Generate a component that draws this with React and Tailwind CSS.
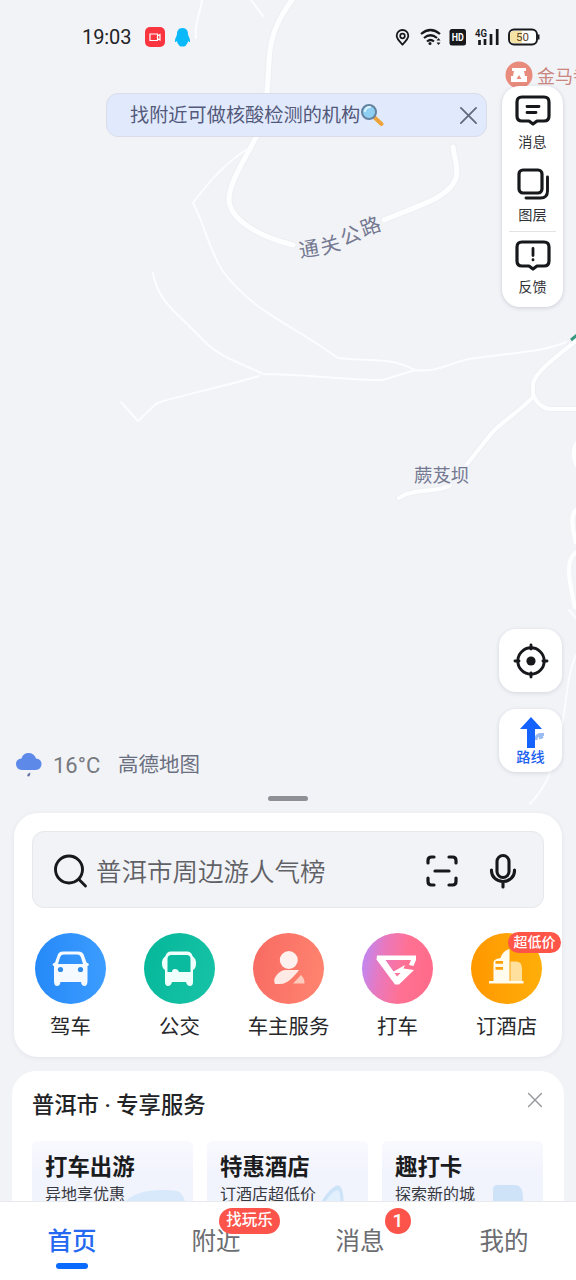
import React from "react";

const ink = "#17181b";

function MapCanvas() {
  return (
    <svg className="absolute inset-0" width="576" height="1280" viewBox="0 0 576 1280" fill="none">
      <g stroke="#e6e8ee" strokeLinecap="round" strokeLinejoin="round" opacity=".4">
        <path strokeWidth="7" d="M292 0C276 22 270 38 269 62C267 90 268 118 253 143C242 164 229 184 229 200C230 218 254 235 293 245M384 220C420 205 450 197 456 178C459 166 454 158 453 147" />
        <path strokeWidth="6" d="M576 341C556 357 535 372 533 384V397C520 411 500 423 491 434C482 445 474 455 465 467M450 485C440 493 412 488 399 498M533 394C536 403 543 409 552 409H576" />
      </g>
      <g stroke="#fdfeff" strokeLinecap="round" strokeLinejoin="round">
        <path strokeWidth="5" d="M292 0C276 22 270 38 269 62C267 90 268 118 253 143C242 164 229 184 229 200C230 218 254 235 293 245M384 220C420 205 450 197 456 178C459 166 454 158 453 147" />
        <path strokeWidth="4" d="M576 341C556 357 535 372 533 384V397C520 411 500 423 491 434C482 445 474 455 465 467M450 485C440 493 412 488 399 498M533 394C536 403 543 409 552 409H576" />
        <path strokeWidth="4" d="M580 440C570 448 574 462 579 468M580 508C567 512 574 532 576 544M577 552C562 560 572 590 575 609" strokeLinecap="butt" />
        <path strokeWidth="2" d="M202 0C200 14 194 24 196 38M251 0L263 16M246 150C230 160 210 180 193 203C204 223 208 247 222 270C246 304 280 320 316 343L338 358C367 362 388 356 415 370C436 373 450 363 469 359C505 353 541 353 566 342M415 370L383 380C350 380 300 374 263 374C245 364 222 360 202 339C182 317 157 302 153 273M259 376C225 386 179 396 157 403L138 421L121 402" opacity=".85" />
        <path strokeWidth="2" d="M569 610L576 618M576 655C564 681 568 719 552 766C547 784 538 795 530 804" opacity=".8" />
      </g>
      <path d="M571 340L577 335" stroke="#37977f" strokeWidth="3" />
      <g fill="#747991" stroke="#f2f3f7" strokeWidth="3" paintOrder="stroke" fontFamily="'Noto Sans CJK SC', sans-serif">
        <g fontSize="20" textAnchor="middle">
          <text transform="translate(310 256) rotate(-10)">通</text>
          <text transform="translate(332 252) rotate(-16)">关</text>
          <text transform="translate(353 242) rotate(-22)">公</text>
          <text transform="translate(373 233) rotate(-20)">路</text>
        </g>
        <text x="414" y="482" fontSize="18.4">蕨芨坝</text>
        <text x="537" y="83" fontSize="18" fill="#c98780">金马寺</text>
      </g>
      <circle cx="519" cy="75" r="13.500" fill="#e88b7c" />
      <path d="M512 68h14v3h-2l1 5h2v6h-16v-6h2l1-5h-2z" fill="#fff" />
      <path d="M519 75l2.500 4h-5z" fill="#e88b7c" />
    </svg>
  );
}

function StatusBar() {
  return (
    <div className="relative flex h-[74px] shrink-0 items-center pl-[82px] pr-9">
      <span className="w-[62px] text-[20px] tracking-[-0.1px] text-[#222327]">19:03</span>
      <svg width="52" height="24" viewBox="0 0 52 24">
        <rect x="1" y="2" width="20" height="20" rx="5" fill="#fa3540" />
        <path d="M6 9h7.500v6.500H6zM13.500 11l2.500-1.500v5.500l-2.500-1.500" fill="none" stroke="#fff" strokeWidth="1.200" />
        <path d="M38.500 3c-4 0-5.500 3-5.500 6c0 2-2.500 5-2 7.500c.4 1.500 1.500-.5 2-.5c.2 2 1 3 2 4c0 2 7 2 7 0c1-1 1.800-2 2-4c.5 0 1.600 2 2 .5c.5-2.500-2-5.500-2-7.500c0-3-1.500-6-5.500-6z" fill="#09b9fa" />
      </svg>
      <div className="grow" />
      <svg width="146" height="24" viewBox="394 25 146 24" fill="none">
        <path d="M402.500 44.500c-3-3-5.800-5.500-5.800-8.700a5.800 5.800 0 0 1 11.600 0c0 3.200-2.800 5.700-5.800 8.700z" stroke={ink} strokeWidth="1.800" />
        <circle cx="402.500" cy="36" r="2.300" stroke={ink} strokeWidth="1.700" />
        <path d="M421 34q9.500-8 19 0M424 38q6.500-5.500 13 0M427 41.500q3.500-3 7 0" stroke={ink} strokeWidth="2.200" />
        <circle cx="430" cy="43.500" r="1.500" fill={ink} />
        <path d="M436.500 40.500l2-2.500l2 2.500zM436.500 42.500l2 2.500l2-2.500z" fill={ink} />
        <rect x="449.500" y="29" width="16.500" height="16.500" rx="2.500" fill={ink} />
        <text x="451.700" y="41.200" fontSize="10.500" fontWeight="700" fill="#fff" fontFamily="Roboto, sans-serif" textLength="12" lengthAdjust="spacingAndGlyphs">HD</text>
        <text x="475" y="37" fontSize="10.500" fontWeight="600" fill={ink} fontFamily="Roboto, sans-serif" textLength="12" lengthAdjust="spacingAndGlyphs">4G</text>
        <path d="M479.500 45v-5M485 45v-6M491 45v-11M497.200 45v-16" stroke={ink} strokeWidth="2.700" />
        <rect x="509" y="29.500" width="28" height="15" rx="5" fill="#fff" stroke={ink} strokeWidth="1.900" />
        <path d="M514 31h8v12h-8q-4 0-4-4v-4q0-4 4-4z" fill="#f5e3a5" />
        <path d="M538.500 34.500v5" stroke={ink} strokeWidth="2" />
        <text x="522.500" y="41.200" fontSize="11.500" textAnchor="middle" fill="#60452c" fontFamily="Roboto, sans-serif">50</text>
      </svg>
    </div>
  );
}

function Bubble({ children }) {
  return (
    <svg width="38" height="34" viewBox="0 0 38 34" fill="none" stroke={ink} strokeWidth="3.200" strokeLinecap="round" strokeLinejoin="round">
      <path d="M8 3h22q5 0 5 5v14q0 5-5 5h-7l-4 3l-4-3H8q-5 0-5-5V8q0-5 5-5z" />
      {children}
    </svg>
  );
}

function SideItem({ label, children }) {
  return (
    <div className="flex h-[72.500px] flex-col items-center pt-[8px]">
      {children}
      <span className="mt-[4px] text-[14.200px] leading-[20px] text-[#303136]">{label}</span>
    </div>
  );
}

function SideTools() {
  return (
    <div className="h-[221px] w-[61px] rounded-[18px] bg-white shadow-[0_1px_4px_rgba(50,60,90,0.2)]">
      <SideItem label="消息">
        <Bubble><path strokeWidth="2.800" d="M13 12.500h12M13 18.500h9" /></Bubble>
      </SideItem>
      <SideItem label="图层">
        <svg width="38" height="34" viewBox="0 0 38 34" fill="none" stroke={ink} strokeWidth="3.200" strokeLinecap="round">
          <rect x="5" y="3" width="23" height="23" rx="4" />
          <path d="M33.500 10v14q0 7-7 7H12" strokeWidth="2.900" />
        </svg>
      </SideItem>
      <div className="mx-[7px] -mb-px h-px bg-[#e2e3e7]" />
      <SideItem label="反馈">
        <Bubble><path strokeWidth="2.800" d="M19 9.500v7M19 20.700v.2" /></Bubble>
      </SideItem>
    </div>
  );
}

function CloseIcon({ className, size, stroke = 1.8 }) {
  return (
    <svg className={className} width={size} height={size} viewBox="0 0 20 20" stroke="currentColor" strokeWidth={stroke} strokeLinecap="round">
      <path d="M2 2l16 16M18 2L2 18" />
    </svg>
  );
}

function Notice() {
  return (
    <div className="mt-[19px] flex h-[44px] w-[381px] items-center rounded-[12px] border border-[#dadde7] bg-[#e1eafd] pl-[23px] pr-[8px]">
      <span className="mt-[2px] text-[19.200px] leading-[28px] text-[#53597a]">找附近可做核酸检测的机构</span>
      <svg width="24" height="24" viewBox="0 0 24 24">
        <path d="M14 14l7.500 7" stroke="#eda33b" strokeWidth="4" strokeLinecap="round" />
        <circle cx="9" cy="9" r="7" fill="#8fd0f2" stroke="#65829e" strokeWidth="2" />
        <path d="M5 8q1-4 5-4" stroke="#def5ff" strokeWidth="2" fill="none" strokeLinecap="round" />
      </svg>
      <div className="grow" />
      <CloseIcon className="text-[#62697d]" size={19} stroke={1.9} />
    </div>
  );
}

function FloatingButtons() {
  return (
    <div className="flex flex-col gap-[17px]">
      <div className="flex size-[63px] items-center justify-center rounded-[17px] bg-white shadow-[0_1px_4px_rgba(50,60,90,0.16)]">
        <svg width="36" height="36" viewBox="0 0 36 36" fill="none" stroke={ink} strokeWidth="2.900" strokeLinecap="round">
          <circle cx="18" cy="18" r="13.200" />
          <circle cx="18" cy="18" r="4.600" fill={ink} stroke="none" />
          <path d="M18 2v4M18 30v4M2 18h4M30 18h4" />
        </svg>
      </div>
      <div className="flex size-[63px] flex-col items-center rounded-[17px] bg-white pt-[7px] shadow-[0_1px_4px_rgba(50,60,90,0.16)]">
        <svg width="32" height="32" viewBox="0 0 32 32">
          <path d="M21 24q0-5 4-5.500h4M24 22l4-1.500" stroke="#9bbcf3" strokeWidth="3" fill="none" />
          <path d="M16 1l11 12h-7v19h-8V13H5z" fill="#1463ff" />
        </svg>
        <span className="text-[14.200px] leading-[18px] font-medium text-[#1d62ee]">路线</span>
      </div>
    </div>
  );
}

function Weather() {
  return (
    <div className="flex h-[30px] items-center pl-[15px]">
      <svg width="28" height="28" viewBox="0 0 28 28">
        <path d="M7 19q-6-.5-6-6q0-5 5.500-5.500Q8 2 13.500 2T21 7.500Q26.500 8 26.500 13q0 5.500-6 6z" fill="#5d8ae8" />
        <path d="M14 22q1-.5 1.300-.5q0 4-2 4q-1.800-.2-.8-2z" fill="#6574a5" />
      </svg>
      <span className="ml-[10px] w-[65px] text-[22px] text-[#77797f]">16°C</span>
      <span className="text-[20.500px] text-[#6b7080]">高德地图</span>
    </div>
  );
}

function SearchBox() {
  return (
    <div className="flex h-[77px] items-center rounded-[12px] border border-[#e7e8ec] bg-[#f2f3f7] pl-[20px] pr-[26px] pt-[2px]">
      <svg width="36" height="36" viewBox="0 0 36 36" fill="none" stroke={ink} strokeWidth="2.900" strokeLinecap="round">
        <circle cx="16" cy="16.500" r="13.500" />
        <path d="M26.500 27l6 6" />
      </svg>
      <span className="ml-[7px] mt-[2px] text-[25.500px] leading-[36px] font-[350] text-[#606166]">普洱市周边游人气榜</span>
      <div className="grow" />
      <svg width="34" height="34" viewBox="0 0 34 34" fill="none" stroke={ink} strokeWidth="3.200" strokeLinecap="round">
        <path d="M3 9V6.500Q3 3 6.500 3H9M24 3h3.500Q31 3 31 6.500V9M3 24v3.500Q3 31 6.500 31H9M24 31h3.500Q31 31 31 27.500V24M10 17h14" />
      </svg>
      <svg className="ml-[30px]" width="28" height="36" viewBox="0 0 28 36" fill="none" stroke={ink} strokeWidth="3.100" strokeLinecap="round">
        <rect x="8" y="2.500" width="12" height="22" rx="6" />
        <path d="M2.500 17v1a11.500 10.500 0 0 0 23 0v-1M14 28.500v5.500" />
      </svg>
    </div>
  );
}

const services = [
  {
    name: "驾车",
    color: "bg-[linear-gradient(90deg,#2589f8,#3c9cff)]",
    art: (
      <>
        <path fillRule="evenodd" fill="#f4faff" d="M28 18.500h15q5 0 6 4l2.500 7l2 1q1 2-1 2.500v15q0 5-3 5q-3 0-3.500-4H25.500q-.5 4-3.500 4q-3 0-3-5V33q-2-.5-1-2.500l2-1l2.500-7q1-4 5.500-4zm1 3q-3 0-4 3l-2 6.500h25l-2-6.500q-1-3-4-3z" />
        <circle cx="25.500" cy="36.500" r="2.600" fill="#2e8be9" /><circle cx="45.500" cy="36.500" r="2.600" fill="#2e8be9" />
      </>
    ),
  },
  {
    name: "公交",
    color: "bg-[linear-gradient(110deg,#05b79a,#18c3a7)]",
    art: (
      <>
        <path fill="#effffb" d="M27 18.500h16q4.500 0 5.500 4.500q4 3 3.500 8q0 4-3 6v12q0 4-3 4t-4-4H28q-1 4-4 4t-3-4V37q-3-2-3-6q-.5-5 3.500-8q1-4.500 5.500-4.500z" />
        <path fill="#0abb9f" d="M27.500 22h15q4 0 4 4v13H35q-1-3-4-3q-3 0-3 3h-4.500V26q0-4 4-4z" />
      </>
    ),
  },
  {
    name: "车主服务",
    color: "bg-[linear-gradient(100deg,#f86a62,#ff8570)]",
    art: (
      <>
        <circle cx="35.800" cy="27" r="9" fill="#fff1ee" />
        <path d="M22 51q-2-4 1-8q4-5.500 9-6h14q-2 3-7 8q-6 6-12 6z" fill="#ffeae5" />
        <path d="M40 50.500l8-8.500q4 4 3.500 8.500z" fill="#ffcbbd" />
      </>
    ),
  },
  {
    name: "打车",
    color: "bg-[linear-gradient(100deg,#b68aff_0%,#e978bd_30%,#ff7193_58%,#ff6a87_100%)]",
    art: <path d="M15 22.500H54V27L51.500 33L47 32L49 27H23.500L35 43.500L38.500 40H29L43 32L41.500 35.500L52 37L37 51.500H33L14.500 26.500z" fill="#fff" />,
  },
  {
    name: "订酒店",
    color: "bg-[linear-gradient(90deg,#ff9800,#ffae0a)]",
    badge: "超低价",
    art: (
      <>
        <path d="M39.500 28.500H45q6 0 6 7V48H39.500z" fill="#ffe09c" />
        <path fillRule="evenodd" d="M22.500 48V30q0-3 3-4l4-1q2-7 9-9V48h14v2.500H18V48zm2-20v2.800H32V28zm0 6v2.800H32V34z" fill="#fffbed" />
      </>
    ),
  },
];

function Service({ item }) {
  return (
    <div className="flex w-[109px] flex-col items-center">
      <div className={"relative size-[71px] rounded-full " + item.color}>
        <svg width="71" height="71" viewBox="0 0 71 71">{item.art}</svg>
        {item.badge && (
          <span className="absolute -top-px left-[37px] flex h-[21px] w-[53px] items-center justify-center rounded-full bg-[#ff5549] text-[14px] font-medium text-white">{item.badge}</span>
        )}
      </div>
      <span className="mt-[8px] text-[20.400px] leading-[30px] text-[#27282b]">{item.name}</span>
    </div>
  );
}

const offers = [
  {
    title: "打车出游",
    sub: "异地享优惠",
    art: <path d="M4 13Q20 3 56 6Q63 7 66 18H4z" fill="#d8e9fb" />,
  },
  {
    title: "特惠酒店",
    sub: "订酒店超低价",
    art: <path d="M24 18Q30 8 40 4Q47 2 46 18" fill="#e2effc" stroke="#cce3f8" strokeWidth="3" />,
  },
  {
    title: "趣打卡",
    sub: "探索新的城",
    art: <path d="M22 18V5Q22 2 26 2H44Q52 2 52 11V18z" fill="#cfe3f8" />,
  },
];

function Offer({ item }) {
  return (
    <div className="relative h-[90px] w-[161px] overflow-hidden rounded-[6px] bg-[linear-gradient(180deg,#f9f9fe,#f1f3fd_40%)] pl-[13px] pt-[10px]">
      <svg className="absolute right-0 top-[41px]" width="72" height="30" viewBox="0 0 72 20" preserveAspectRatio="none">{item.art}</svg>
      <div className="relative text-[22.400px] leading-[32px] font-bold text-[#1b1c20]">{item.title}</div>
      <div className="relative text-[16px] leading-[24px] text-[#37393f]">{item.sub}</div>
    </div>
  );
}

const tabs = [
  { label: "首页", active: true },
  { label: "附近", badge: "找玩乐", shape: "left-[75px] w-[61px] text-[15.500px]" },
  { label: "消息", badge: "1", shape: "left-[97px] w-[26px] text-[19px]" },
  { label: "我的" },
];

function TabBar() {
  return (
    <div className="relative flex h-[79px] shrink-0 border-t border-[#e9eaee] bg-white">
      {tabs.map((t) => (
        <div key={t.label} className="relative flex w-36 flex-col items-center pt-[22px]">
          <span className={"text-[24.500px] leading-[36px] " + (t.active ? "font-medium text-[#2569f2]" : "text-[#6c6d71]")}>{t.label}</span>
          {t.active && <div className="mt-[3px] h-[6px] w-8 rounded-full bg-[#0b6bff]" />}
          {t.badge && (
            <span className={"absolute top-[6px] flex h-[26px] items-center justify-center rounded-full bg-[#fc544b] font-medium text-white " + t.shape}>{t.badge}</span>
          )}
        </div>
      ))}
    </div>
  );
}

export default function App() {
  return (
    <div className="relative flex h-[1280px] w-[576px] flex-col overflow-hidden bg-[#f2f3f7] font-[Roboto,'Noto_Sans_CJK_SC',sans-serif]">
      <MapCanvas />
      <StatusBar />
      <div className="relative flex shrink-0 items-start justify-between pl-[106px] pr-[13px]">
        <Notice />
        <div className="pt-[12px]"><SideTools /></div>
      </div>
      <div className="relative mt-[322px] flex h-[167px] shrink-0 items-start justify-between pr-[14px]">
        <div className="pt-[121px]"><Weather /></div>
        <FloatingButtons />
      </div>
      <div className="relative h-[5px] w-10 shrink-0 self-center rounded-full bg-[#8f9095]" />
      <div className="relative mx-[14px] mt-[12px] h-[244px] shrink-0 rounded-[24px] bg-white px-[18px] pt-[18px] shadow-[0_1px_5px_rgba(50,60,90,0.08)]">
        <SearchBox />
        <div className="-ml-[16px] mt-[25px] flex w-[545px]">
          {services.map((s) => <Service key={s.name} item={s} />)}
        </div>
      </div>
      <div className="relative mx-[12px] mt-[14px] min-h-0 grow overflow-hidden rounded-t-[24px] bg-white pl-[20px] pt-[18px]">
        <div className="flex h-[32px] items-center justify-between pr-[21px]">
          <span className="mt-[2px] text-[22.300px] font-medium text-[#222326]">普洱市 · 专享服务</span>
          <CloseIcon className="-mt-[10px] text-[#97999d]" size={16} />
        </div>
        <div className="mt-[20px] flex gap-[14px]">
          {offers.map((o) => <Offer key={o.title} item={o} />)}
        </div>
      </div>
      <TabBar />
    </div>
  );
}
